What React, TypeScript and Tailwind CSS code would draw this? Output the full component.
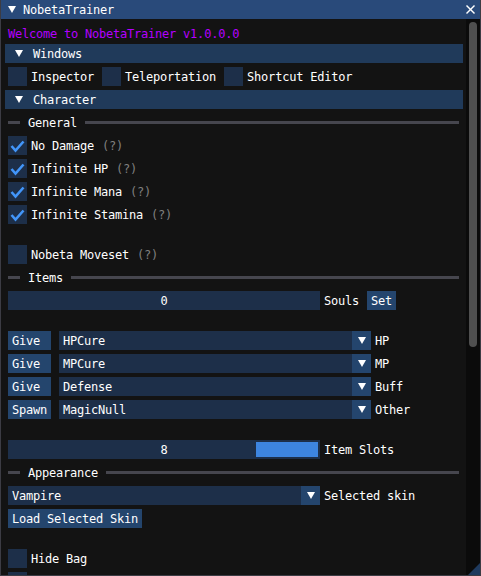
import React from "react";

const FONT =
  "font-['DejaVu_Sans_Mono',monospace] text-[12px] leading-[13px] tracking-[-0.22px]";
const T = "relative top-[1px]";

function Tri({ className = "" }: { className?: string }) {
  return (
    <svg width="8" height="7" viewBox="0 0 8 7" className={className}>
      <polygon points="0,0 8,0 4,7" fill="#ffffff" />
    </svg>
  );
}

function Check() {
  return (
    <svg width="19" height="19" viewBox="0 0 19 19">
      <polyline
        points="3.5,10 7.5,14.5 15.5,5.5"
        fill="none"
        stroke="#4296fa"
        strokeWidth="2.6"
        strokeLinejoin="miter"
      />
    </svg>
  );
}

function Checkbox({
  label,
  checked = false,
  help = false,
}: {
  label: string;
  checked?: boolean;
  help?: boolean;
}) {
  return (
    <div className="flex items-center h-[19px] shrink-0">
      <div className="w-[19px] h-[19px] bg-[#1d2f49] shrink-0">
        {checked && <Check />}
      </div>
      {label && <span className={`${T} ml-[4px] text-white whitespace-pre`}>{label}</span>}
      {help && <span className={`${T} ml-[8px] text-[#808080]`}>(?)</span>}
    </div>
  );
}

function Header({ label }: { label: string }) {
  return (
    <div className="-ml-[3px] w-[458px] h-[19px] bg-[#203a5a] flex items-center shrink-0">
      <Tri className="ml-[10px]" />
      <span className={`${T} ml-[10px] text-white`}>{label}</span>
    </div>
  );
}

function SepText({ label }: { label: string }) {
  return (
    <div className="h-[19px] flex items-center shrink-0">
      <div className="w-[12px] h-[3px] bg-[#46464e]" />
      <span className={`${T} ml-[8px] text-white`}>{label}</span>
      <div className="ml-[8px] flex-1 h-[3px] bg-[#46464e]" />
    </div>
  );
}

function Combo({ value, w = 312 }: { value: string; w?: number }) {
  return (
    <div
      className="h-[19px] bg-[#1d2f49] flex items-center shrink-0"
      style={{ width: w }}
    >
      <span className={`${T} flex-1 pl-[4px] text-white`}>{value}</span>
      <div className="w-[19px] h-[19px] bg-[#24456d] flex items-center justify-center">
        <Tri />
      </div>
    </div>
  );
}

function GiveRow({ btn, value, label }: { btn: string; value: string; label: string }) {
  return (
    <div className="flex items-center h-[19px] shrink-0">
      <div className="w-[43px] h-[19px] bg-[#24456d] flex items-center pl-[4px] text-white">
        <span className={T}>{btn}</span>
      </div>
      <div className="ml-[8px]">
        <Combo value={value} />
      </div>
      <span className={`${T} ml-[4px] text-white`}>{label}</span>
    </div>
  );
}

export default function App() {
  return (
    <div
      className={`${FONT} relative w-[481px] h-[576px] overflow-hidden bg-[#131313] border-x border-b border-[#3c3c44] text-white`}
    >
      {/* title bar */}
      <div className="h-[19px] bg-[#294a7a] flex items-center relative -mx-px">
        <Tri className="ml-[8px]" />
        <span className={`${T} ml-[7px] text-white`}>NobetaTrainer</span>
        <svg
          width="9"
          height="9"
          viewBox="0 0 9 9"
          className="absolute left-[466px] top-[5px]"
        >
          <line x1="0.5" y1="0.5" x2="8.5" y2="8.5" stroke="#fff" strokeWidth="1.4" />
          <line x1="8.5" y1="0.5" x2="0.5" y2="8.5" stroke="#fff" strokeWidth="1.4" />
        </svg>
      </div>

      <div className="flex h-[556px]">
        {/* content */}
        <div className="w-[465px] px-[7px] pt-[8px] flex flex-col gap-[4px] overflow-hidden">
          <div className="h-[13px] text-[#b400ff] shrink-0">
            <span className={T}>Welcome to NobetaTrainer v1.0.0.0</span>
          </div>
          <Header label="Windows" />
          <div className="flex items-center gap-[8px] h-[19px] shrink-0">
            <Checkbox label="Inspector" />
            <Checkbox label="Teleportation" />
            <Checkbox label="Shortcut Editor" />
          </div>
          <Header label="Character" />
          <SepText label="General" />
          <Checkbox label="No Damage" checked help />
          <Checkbox label="Infinite HP" checked help />
          <Checkbox label="Infinite Mana" checked help />
          <Checkbox label="Infinite Stamina" checked help />
          <div className="h-[13px] shrink-0" />
          <Checkbox label="Nobeta Moveset" help />
          <SepText label="Items" />
          <div className="flex items-center h-[19px] shrink-0">
            <div className="w-[312px] h-[19px] bg-[#1d2f49] flex items-center justify-center text-white">
              <span className={T}>0</span>
            </div>
            <span className={`${T} ml-[4px]`}>Souls</span>
            <div className="ml-[8px] h-[19px] px-[4px] bg-[#24456d] flex items-center">
              <span className={T}>Set</span>
            </div>
          </div>
          <div className="h-[13px] shrink-0" />
          <GiveRow btn="Give" value="HPCure" label="HP" />
          <GiveRow btn="Give" value="MPCure" label="MP" />
          <GiveRow btn="Give" value="Defense" label="Buff" />
          <GiveRow btn="Spawn" value="MagicNull" label="Other" />
          <div className="h-[13px] shrink-0" />
          <div className="flex items-center h-[19px] shrink-0">
            <div className="relative w-[312px] h-[19px] bg-[#1d2f49] flex items-center justify-center">
              <div className="absolute left-[248px] top-[2px] w-[62px] h-[15px] bg-[#3d85e0]" />
              <span className={T}>8</span>
            </div>
            <span className={`${T} ml-[4px]`}>Item Slots</span>
          </div>
          <SepText label="Appearance" />
          <div className="flex items-center h-[19px] shrink-0">
            <Combo value="Vampire" />
            <span className={`${T} ml-[4px]`}>Selected skin</span>
          </div>
          <div className="self-start h-[19px] px-[4px] bg-[#24456d] flex items-center shrink-0">
            <span className={T}>Load Selected Skin</span>
          </div>
          <div className="h-[13px] shrink-0" />
          <Checkbox label="Hide Bag" />
          <Checkbox label="" />
        </div>

        {/* scrollbar */}
        <div className="relative w-[14px] h-full bg-[#0b0b0b]">
          <div className="absolute left-[3px] top-[3px] w-[8px] h-[325px] rounded-full bg-[#4f4f4f]" />
        </div>
      </div>

      {/* resize grip */}
      <svg
        width="12"
        height="12"
        viewBox="0 0 12 12"
        className="absolute right-0 bottom-0"
      >
        <polygon points="12,0 12,12 0,12" fill="#1f3a5e" />
      </svg>
    </div>
  );
}
